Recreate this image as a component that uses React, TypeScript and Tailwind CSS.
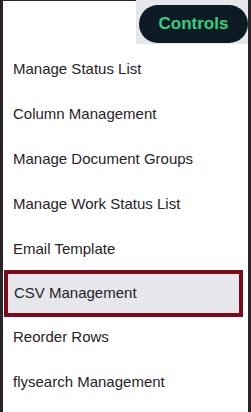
export default function App() {
  const items = [
    "Manage Status List",
    "Column Management",
    "Manage Document Groups",
    "Manage Work Status List",
    "Email Template",
    "CSV Management",
    "Reorder Rows",
    "flysearch Management",
  ];
  const active = "CSV Management";

  return (
    <div
      className="w-[251px] h-[412px] overflow-hidden bg-white border-l-[3px] border-r-[3px] border-[#2a2327]"
      style={{ fontFamily: '"Liberation Sans", Arial, sans-serif' }}
    >
      <div className="flex h-[45px]">
        <div className="flex-1 border-t border-[#2a2327]" />
        <div className="w-[112px] h-[44px] bg-[#e5e7eb] pt-[5px] pl-[3px]">
          <button className="w-full h-[38px] rounded-full bg-[#0d1b24] text-[#34d07f] text-[17px] font-bold">
            Controls
          </button>
        </div>
      </div>
      <ul className="pt-[2px]">
        {items.map((item) =>
          item === active ? (
            <li key={item} className="h-[45px] pr-[5px] pl-[1px]">
              <div className="h-[47px] -mt-[2px] flex items-center pl-[6px] border-4 border-[#7b0a1c] bg-[#e5e7eb] text-[15px] text-[#1f2328]">
                {item}
              </div>
            </li>
          ) : (
            <li key={item} className="h-[45px] flex items-center pl-[10px] text-[15px] text-[#1f2328]">
              {item}
            </li>
          )
        )}
      </ul>
    </div>
  );
}
